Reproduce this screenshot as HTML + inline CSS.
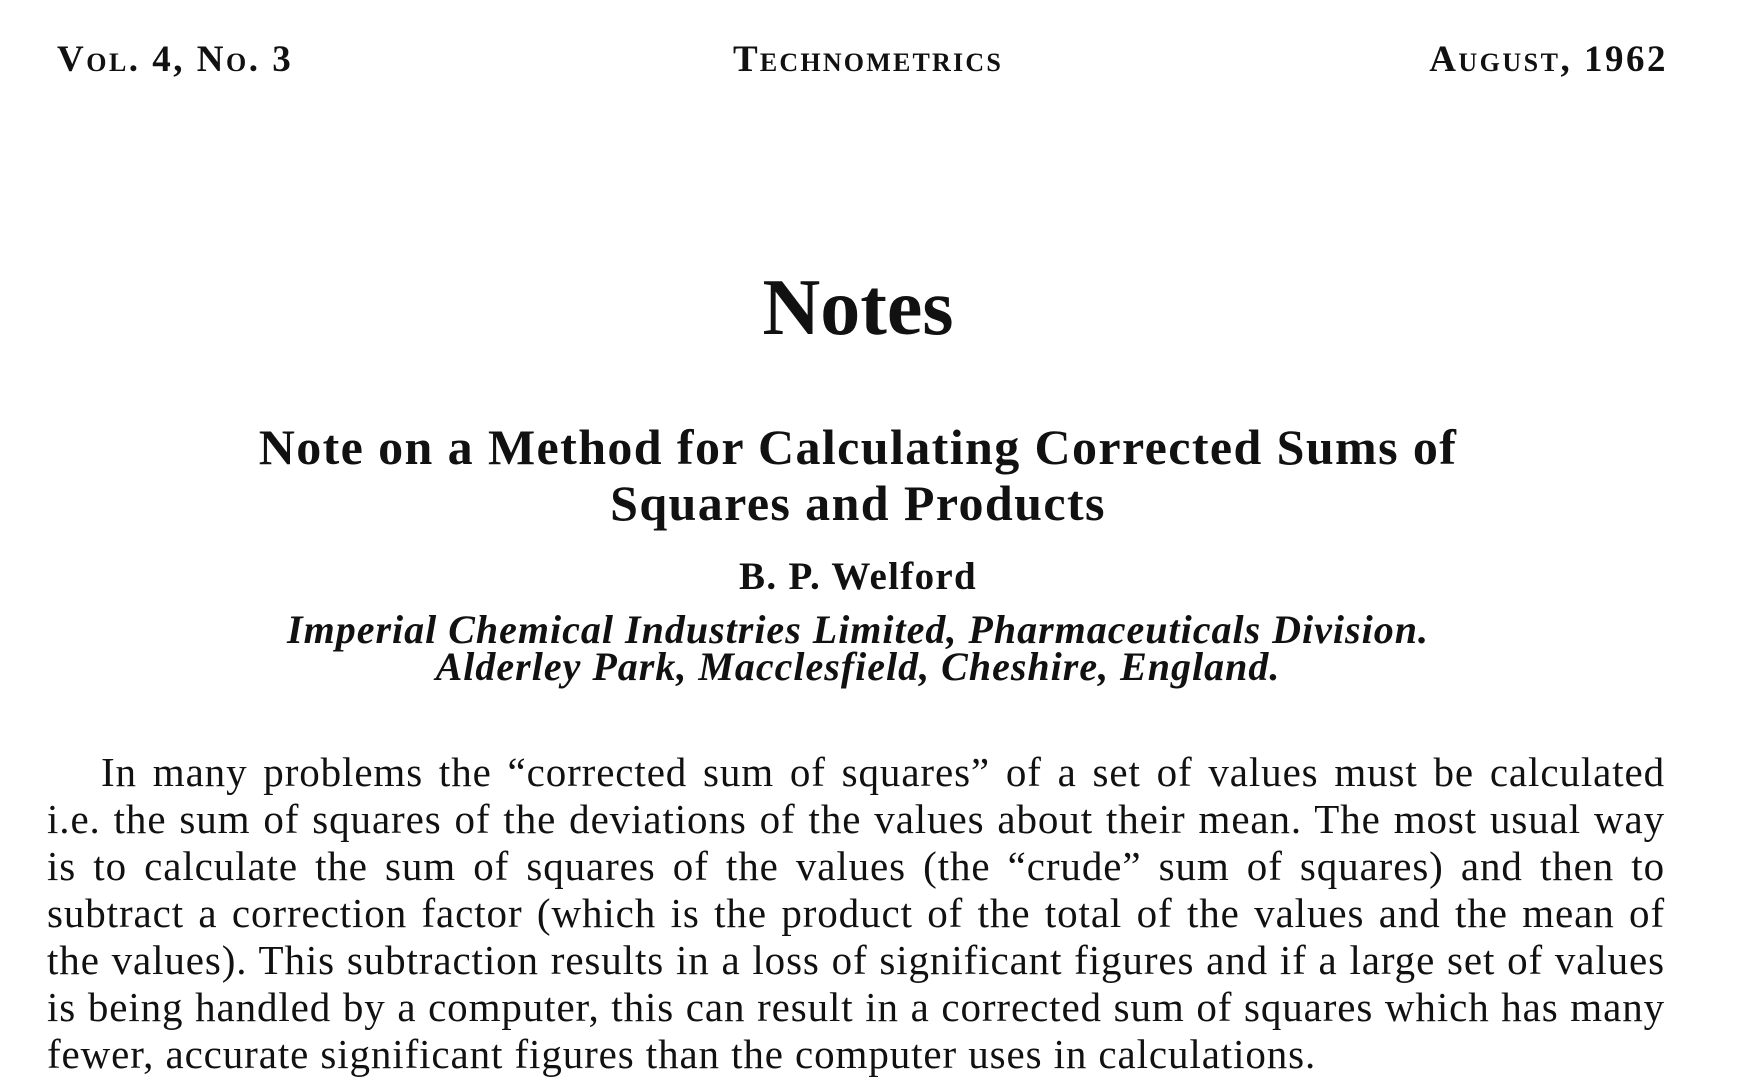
<!DOCTYPE html>
<html><head><meta charset="utf-8"><style>
html,body{margin:0;padding:0;background:#fff;}
body{width:1760px;height:1078px;position:relative;overflow:hidden;font-family:"Liberation Serif",serif;color:#111;}
.a{position:absolute;line-height:1;white-space:nowrap;}
.sc{font-variant:small-caps;font-size:37px;letter-spacing:2.5px;font-weight:bold;}
.c{left:0;width:1716px;text-align:center;}
.b{position:absolute;left:47px;width:1618px;font-size:41px;line-height:1;text-align:justify;text-align-last:justify;white-space:nowrap;letter-spacing:0.9px;}
</style></head><body>
<div class="a sc" style="left:57px;top:41px;">Vol. 4, No. 3</div>
<div class="a sc" style="left:0;width:1736px;text-align:center;top:41px;letter-spacing:2.2px;">Technometrics</div>
<div class="a sc" style="right:92px;top:41px;">August, 1962</div>

<div class="a c" style="top:268px;font-size:80px;font-weight:bold;">Notes</div>

<div class="a c" style="top:422px;font-size:50px;font-weight:bold;letter-spacing:1.4px;">Note on a Method for Calculating Corrected Sums of</div>
<div class="a c" style="top:478px;font-size:50px;font-weight:bold;letter-spacing:1.4px;">Squares and Products</div>
<div class="a c" style="top:557px;font-size:39px;font-weight:bold;letter-spacing:1.3px;">B. P. Welford</div>
<div class="a c" style="top:610px;font-size:40px;font-weight:bold;font-style:italic;letter-spacing:1px;">Imperial Chemical Industries Limited, Pharmaceuticals Division.</div>
<div class="a c" style="top:647px;font-size:40px;font-weight:bold;font-style:italic;letter-spacing:1px;">Alderley Park, Macclesfield, Cheshire, England.</div>

<div class="b" style="top:752px;left:101px;width:1564px;">In many problems the “corrected sum of squares” of a set of values must be calculated</div>
<div class="b" style="top:799px;">i.e. the sum of squares of the deviations of the values about their mean. The most usual way</div>
<div class="b" style="top:846px;">is to calculate the sum of squares of the values (the “crude” sum of squares) and then to</div>
<div class="b" style="top:893px;">subtract a correction factor (which is the product of the total of the values and the mean of</div>
<div class="b" style="top:940px;">the values). This subtraction results in a loss of significant figures and if a large set of values</div>
<div class="b" style="top:987px;">is being handled by a computer, this can result in a corrected sum of squares which has many</div>
<div class="b" style="top:1034px;text-align:left;text-align-last:left;">fewer, accurate significant figures than the computer uses in calculations.</div>
</body></html>
